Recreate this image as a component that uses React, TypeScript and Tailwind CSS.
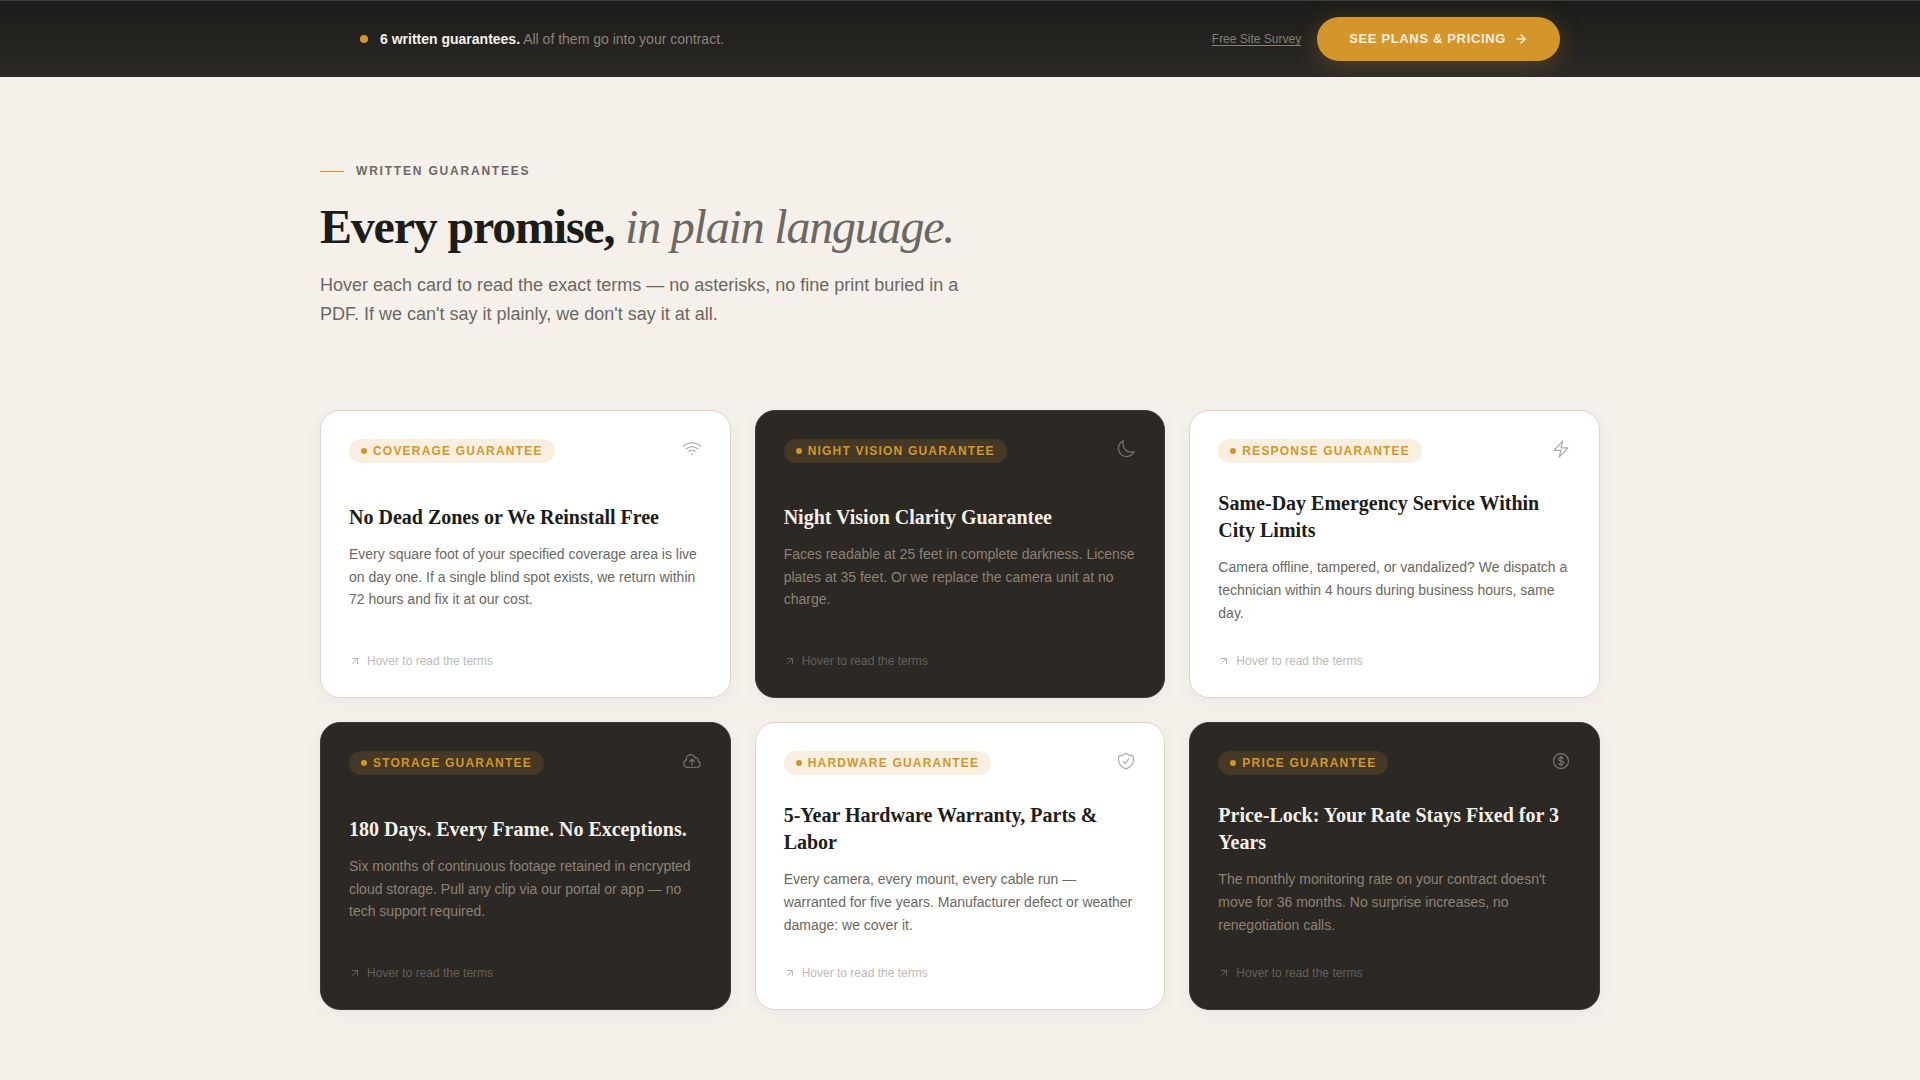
import { ArrowRight, ArrowUpRight } from "lucide-react";
import type { IconType } from "react-icons";
import {
  HiOutlineBolt,
  HiOutlineCloudArrowUp,
  HiOutlineCurrencyDollar,
  HiOutlineMoon,
  HiOutlineShieldCheck,
  HiOutlineWifi,
} from "react-icons/hi2";

interface Guarantee {
  tag: string;
  title: string;
  description: string;
  icon: IconType;
  dark: boolean;
}

const guarantees: Guarantee[] = [
  {
    tag: "Coverage Guarantee",
    title: "No Dead Zones or We Reinstall Free",
    description:
      "Every square foot of your specified coverage area is live on day one. If a single blind spot exists, we return within 72 hours and fix it at our cost.",
    icon: HiOutlineWifi,
    dark: false,
  },
  {
    tag: "Night Vision Guarantee",
    title: "Night Vision Clarity Guarantee",
    description:
      "Faces readable at 25 feet in complete darkness. License plates at 35 feet. Or we replace the camera unit at no charge.",
    icon: HiOutlineMoon,
    dark: true,
  },
  {
    tag: "Response Guarantee",
    title: "Same-Day Emergency Service Within City Limits",
    description:
      "Camera offline, tampered, or vandalized? We dispatch a technician within 4 hours during business hours, same day.",
    icon: HiOutlineBolt,
    dark: false,
  },
  {
    tag: "Storage Guarantee",
    title: "180 Days. Every Frame. No Exceptions.",
    description:
      "Six months of continuous footage retained in encrypted cloud storage. Pull any clip via our portal or app — no tech support required.",
    icon: HiOutlineCloudArrowUp,
    dark: true,
  },
  {
    tag: "Hardware Guarantee",
    title: "5-Year Hardware Warranty, Parts & Labor",
    description:
      "Every camera, every mount, every cable run — warranted for five years. Manufacturer defect or weather damage: we cover it.",
    icon: HiOutlineShieldCheck,
    dark: false,
  },
  {
    tag: "Price Guarantee",
    title: "Price-Lock: Your Rate Stays Fixed for 3 Years",
    description:
      "The monthly monitoring rate on your contract doesn't move for 36 months. No surprise increases, no renegotiation calls.",
    icon: HiOutlineCurrencyDollar,
    dark: true,
  },
];

function GuaranteeCard({ tag, title, description, icon: Icon, dark }: Guarantee) {
  return (
    <article
      className={`flex min-h-72 flex-col justify-between rounded-[20px] border p-7 shadow-[0_4px_16px_rgba(28,28,26,0.04)] ${
        dark ? "border-[#3a3a37] bg-[#2c2824]" : "border-[#ddd6cf] bg-white"
      }`}
    >
      <div className="flex items-start justify-between">
        <span
          className={`inline-flex h-6 items-center gap-1.5 rounded-full px-3 text-xs font-bold uppercase tracking-widest text-[#d4962a] ${
            dark ? "bg-[#d4962a]/15" : "bg-[#f9efe0]"
          }`}
        >
          <span className="size-1.5 rounded-full bg-[#d4962a]" />
          {tag}
        </span>
        <Icon className={`size-5 ${dark ? "text-[#77726b]" : "text-[#b0aeab]"}`} />
      </div>

      <div>
        <h3
          className={`mb-3 font-['Liberation_Serif',serif] text-xl leading-[27px] font-bold ${
            dark ? "text-[#f5f0ea]" : "text-[#1c1c1a]"
          }`}
        >
          {title}
        </h3>
        <p className={`text-sm leading-relaxed ${dark ? "text-[#8c8376]" : "text-[#6b6762]"}`}>
          {description}
        </p>
      </div>

      <div
        className={`flex items-center gap-1.5 text-xs ${
          dark ? "text-[#65605a]" : "text-[#bcbab8]"
        }`}
      >
        <ArrowUpRight className="size-3" />
        Hover to read the terms
      </div>
    </article>
  );
}

export default function App() {
  return (
    <div className="min-h-screen bg-[#f5f0ea] font-['Liberation_Sans',sans-serif]">
      {/* Top bar */}
      <div className="overflow-hidden border-t border-[#3d3d3a] bg-linear-to-b from-[#1c1c1a] to-[#2c2926]">
        <div className="mx-auto flex max-w-7xl items-center justify-between px-10 py-4">
          <div className="flex items-center gap-3">
            <span className="size-2 rounded-full bg-[#d4962a]" />
            <p className="text-sm text-[#8c8376]">
              <strong className="text-[#f5f0ea]">6 written guarantees.</strong> All of them go into
              your contract.
            </p>
          </div>

          <div className="flex items-center gap-4">
            <a
              href="#survey"
              className="text-xs text-[#85806f] underline underline-offset-2"
            >
              Free Site Survey
            </a>
            <button
              type="button"
              className="flex h-11 items-center gap-2 rounded-full bg-[#d4962a] px-8 text-[13px] font-bold uppercase tracking-wider text-[#f8efe2] shadow-[0_4px_24px_rgba(212,150,42,0.25)]"
            >
              See Plans &amp; Pricing
              <ArrowRight className="size-3.5" strokeWidth={2.5} />
            </button>
          </div>
        </div>
      </div>

      <section className="mx-auto max-w-7xl pt-[86px] pb-20">
        <header className="mb-20 max-w-2xl">
          <div className="mb-5 flex items-center gap-3">
            <span className="h-px w-6 bg-[#d4962a]" />
            <span className="text-xs font-bold uppercase tracking-[0.15em] text-[#6b6762]">
              Written Guarantees
            </span>
          </div>
          <h1 className="mb-4 font-['Liberation_Serif',serif] text-5xl leading-14 font-bold tracking-tight text-[#1c1c1a]">
            Every promise, <em className="font-normal text-[#6b6762]">in plain language.</em>
          </h1>
          <p className="text-lg leading-relaxed text-[#6b6762]">
            Hover each card to read the exact terms — no asterisks, no fine print buried in a PDF.
            If we can't say it plainly, we don't say it at all.
          </p>
        </header>

        <div className="grid gap-6 md:grid-cols-2 lg:grid-cols-3">
          {guarantees.map((guarantee) => (
            <GuaranteeCard key={guarantee.tag} {...guarantee} />
          ))}
        </div>
      </section>
    </div>
  );
}
